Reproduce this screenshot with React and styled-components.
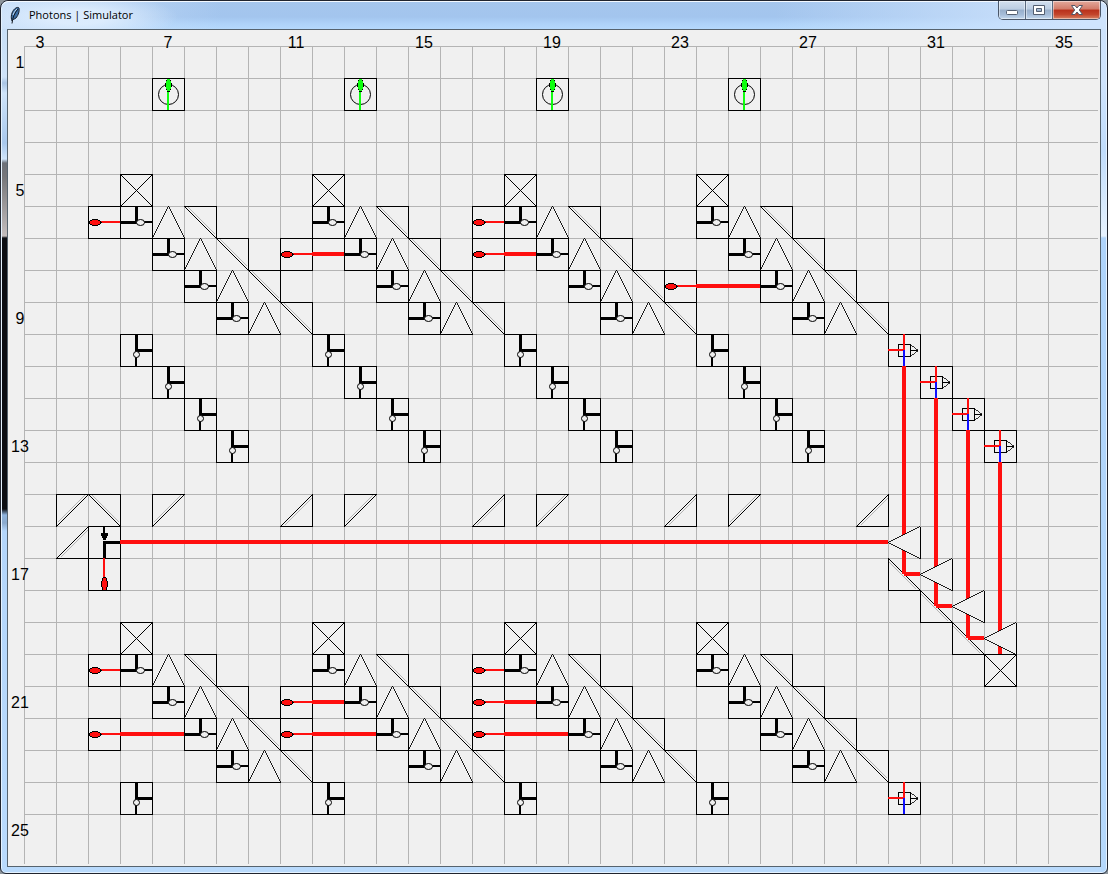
import React from "react";
import styled, { createGlobalStyle } from "styled-components";

const GlobalStyle = createGlobalStyle`
  * { box-sizing: border-box; }
  body { margin: 0; background: #8d959c; }
`;

const Window = styled.div`
  display: flex;
  flex-direction: column;
  min-height: 100vh;
  padding: 0 6px 6px;
  border: 1px solid #20242e;
  border-radius: 8px 8px 6px 6px;
  box-shadow: inset 0 0 0 1px #e4f2ff;
  font-family: "Open Sans", "Noto Sans", sans-serif;
  background:
    linear-gradient(#c3dcf6 0, #cfe3f8 76px, #a9c4e4 82px, #cfe4fa 92px, #a9c8ec 142px, #cfe4fa 158px, #6c7078 162px, #77777a 176px, #c4bdbd 235px, #0b0d12 237px, #0b0d12 508px, #8fb4de 514px, #8aa9cc 522px, #b4d6fb 530px, #b9dafc 100%) 1px 0 / 5px 100% no-repeat,
    linear-gradient(#cbe1fb 0, #cfe4fd 80px, #c0dcfb 150px, #e6f2fe 235px, #aed3fa 237px, #b5d8fc 100%) right 1px top 0 / 5px 100% no-repeat,
    #b9dafc;
`;

const TitleBar = styled.header`
  display: flex;
  align-items: center;
  height: 28px;
  margin: 0 -5px;
  padding: 0 6px 2px;
  border-top: 1px solid #f4f9ff;
  border-radius: 7px 7px 0 0;
  background:
    radial-gradient(ellipse 100px 24px at 76px 15px, rgba(225, 239, 254, 0.85) 30%, rgba(225, 239, 254, 0) 100%),
    linear-gradient(90deg, #c8dff9 0, rgba(200, 223, 249, 0) 220px, rgba(200, 223, 249, 0) 70%, #cfe4fd 98%),
    linear-gradient(#a5c6ed 0, #a3c5ee 55%, #aed2f8 80%, #b5d9fd 100%);
`;

const Title = styled.h1`
  flex: 1;
  margin: 0 0 0 7px;
  color: #000;
  font-size: 11px;
  font-weight: 400;
  line-height: 16px;
  white-space: nowrap;
`;

const Controls = styled.div`
  display: flex;
  align-self: flex-start;
  height: 19px;
  margin-top: -1px;
  margin-right: -1px;
  overflow: hidden;
  border: 1px solid #4a5668;
  border-top: 0;
  border-radius: 0 0 5px 5px;
`;

const ControlButton = styled.button`
  display: flex;
  align-items: center;
  justify-content: center;
  width: ${(p) => (p.$danger ? 47 : 27)}px;
  padding: 0;
  border: 0;
  border-right: ${(p) => (p.$danger ? "0" : "1px solid #5a6a80")};
  background: ${(p) =>
    p.$danger
      ? "linear-gradient(#e3a99c 0, #d27b69 45%, #b8301b 50%, #c3452c 75%, #d98263 100%)"
      : "linear-gradient(#d3e0ef 0, #bccde2 45%, #98afcb 50%, #a5bcd8 75%, #c3d8ee 100%)"};
  box-shadow: inset 0 0 0 1px rgba(255, 255, 255, 0.45);
`;

const Client = styled.main`
  display: flex;
  flex: 1;
  padding: 0 2px 2px 0;
  border: 1px solid #56636e;
  background: #f0f0f0;
`;

const Board = styled.svg`
  display: block;
  flex: 1;
  width: 100%;
  min-width: 0;
  min-height: 800px;
  overflow: hidden;
  shape-rendering: crispEdges;
`;

const Label = styled.text`
  fill: #000;
  font-family: "Liberation Sans", Arial, sans-serif;
  font-size: 16px;
  text-anchor: middle;
`;

const INK = "#000";
const RED = "#ff0f0f";
const GREEN = "#0fff0f";
const BLUE = "#0f0fff";
const PAPER = "#f0f0f0";
const CELL = 32;
const left = (col) => 16 + CELL * (col - 3);
const top = (row) => 16 + CELL * (row - 1);

const range = (n) => Array.from({ length: n }, (_, i) => i);

function Cell({ col, row, children }) {
  return <g transform={`translate(${left(col)} ${top(row)})`}>{children}</g>;
}

const Frame = () => <rect x="0.5" y="0.5" width="32" height="32" fill={PAPER} stroke={INK} />;

const CrossBox = () => (
  <>
    <Frame />
    <path d="M0.5 0.5 32.5 32.5M0.5 32.5 32.5 0.5" stroke={INK} />
  </>
);

const Clock = () => (
  <>
    <Frame />
    <circle cx="16.5" cy="16.5" r="10" fill="none" stroke={INK} shapeRendering="auto" />
    <rect x="15" y="12" width="2" height="20" fill={GREEN} />
    <path d="M15 1h3v1h1v3h1v4h-1v3h-1v2h-3v-2h-1v-3h-1v-4h1v-3h1z" fill={INK} />
    <path d="M15 1h3v2h1v8h-1v2h-3v-2h-1v-8h1z" fill={GREEN} />
  </>
);

const HorizontalBulb = () => (
  <>
    <path d="M4 13h6v1h2v1h1v1h1v1h-1v1h-1v1h-2v1h-6v-1h-2v-1h-1v-1h-1v-1h1v-1h1v-1h2z" fill={INK} />
    <path d="M4 14h6v1h2v3h-2v1h-6v-1h-2v-3h2z" fill={RED} />
  </>
);

const Emitter = () => (
  <>
    <Frame />
    <rect x="13" y="15" width="19" height="2" fill={RED} />
    <HorizontalBulb />
  </>
);

const DownEmitter = () => (
  <>
    <Frame />
    <rect x="15" y="0" width="2" height="20" fill={RED} />
    <path d="M15 19h3v1h1v3h1v6h-1v3h-5v-3h-1v-6h1v-3h1z" fill={INK} />
    <path d="M15 20h3v3h1v6h-1v3h-3v-3h-1v-6h1z" fill={RED} />
  </>
);

const Gate = () => (
  <>
    <Frame />
    <path d="M0 15h15v-15h3v18h-18z" fill={INK} />
    <rect x="23" y="15" width="9" height="2" fill={INK} />
    <ellipse cx="20.5" cy="16.5" rx="4" ry="3" fill={PAPER} stroke={INK} shapeRendering="auto" />
  </>
);

const DropGate = () => (
  <>
    <Frame />
    <path d="M15 0h3v15h14v3h-17z" fill={INK} />
    <rect x="15" y="22" width="2" height="10" fill={INK} />
    <circle cx="16.5" cy="20.5" r="3" fill={PAPER} stroke={INK} shapeRendering="auto" />
  </>
);

const TurnGate = () => (
  <>
    <Frame />
    <rect x="15" y="0" width="2" height="7" fill={INK} />
    <path d="M13 7h7v3h-1v2h-1v2h-3v-2h-1v-2h-1z" fill={INK} />
    <path d="M15 32v-17h17v3h-14v14z" fill={INK} />
  </>
);

const Detector = () => (
  <>
    <Frame />
    <rect x="10.5" y="10.5" width="12" height="12" fill="none" stroke={INK} />
    <path d="M22.5 11.5 29.5 16.5 22.5 21.5" fill="none" stroke={INK} strokeWidth="0.8" />
    <path d="M22.5 16.5h7" stroke={INK} />
    <path d="M15 0h2v17h-17v-2h15z" fill={RED} />
    <rect x="15" y="16" width="2" height="16" fill={BLUE} />
  </>
);

/* Each facing has the two sloped legs and the straight base */
const trianglePaths = {
  up: ["M0.5 32 16.5 0 32.5 32", "M0.5 32.5h32"],
  left: ["M32 0.5 0 16.5 32 32.5", "M32.5 0.5v32"],
};

const Triangle = ({ facing = "up" }) => (
  <>
    <path d={trianglePaths[facing][0]} fill={PAPER} stroke={INK} strokeWidth="0.88" />
    <path d={trianglePaths[facing][1]} stroke={INK} />
  </>
);

const mirrorPaths = {
  upperRight: ["M0.5 0.5H32.5V32.5z", "M4.5 1.5 31.5 28.5"],
  lowerLeft: ["M0.5 0.5V32.5H32.5z", "M1.5 4.5 28.5 31.5"],
  upperLeft: ["M32.5 0.5H0.5V32.5z", "M1.5 28.5 28.5 1.5"],
  lowerRight: ["M0.5 32.5H32.5V0.5z", "M4.5 31.5 31.5 4.5"],
};

const Mirror = ({ side }) => (
  <>
    <path d={mirrorPaths[side][0]} fill={PAPER} stroke={INK} />
    <path d={mirrorPaths[side][1]} stroke="#b4b4b4" />
  </>
);

const parts = {
  cross: CrossBox,
  clock: Clock,
  emitter: Emitter,
  downEmitter: DownEmitter,
  gate: Gate,
  dropGate: DropGate,
  turnGate: TurnGate,
  detector: Detector,
  triangle: Triangle,
  mirror: Mirror,
};

const columns = [6, 12, 18, 24];

const ladder = (col, row) => [
  ["cross", col, row],
  ...range(4).flatMap((i) => [
    ["mirror", col + 2 + i, row + 1 + i, { side: "upperRight" }],
    ["triangle", col + 1 + i, row + 1 + i],
    ["gate", col + i, row + 1 + i],
  ]),
];

const items = [
  ...columns.map((c) => ["clock", c + 1, 2]),
  ...columns.flatMap((c) => [...ladder(c, 5), ...ladder(c, 19)]),
  ...columns.flatMap((c) => range(4).map((i) => ["dropGate", c + i, 10 + i])),
  ...columns.map((c) => ["dropGate", c, 24]),
  ...[[5, 6], [17, 6], [11, 7], [17, 7], [23, 8], [5, 20], [17, 20], [11, 21], [17, 21], [5, 22], [11, 22], [17, 22]].map(
    ([c, r]) => ["emitter", c, r]
  ),
  ...[4, 7, 13, 19, 25].map((c) => ["mirror", c, 15, { side: "upperLeft" }]),
  ["mirror", 5, 15, { side: "upperRight" }],
  ...[11, 17, 23, 29].map((c) => ["mirror", c, 15, { side: "lowerRight" }]),
  ["mirror", 4, 16, { side: "lowerRight" }],
  ["turnGate", 5, 16],
  ["downEmitter", 5, 17],
  ...range(4).map((i) => ["detector", 30 + i, 10 + i]),
  ["detector", 30, 24],
  ...range(3).map((i) => ["mirror", 30 + i, 17 + i, { side: "lowerLeft" }]),
  ["cross", 33, 20],
];

/* Beams that cross whole cells: first column, row, number of cells */
const rowBeams = [
  [12, 7, 1], [18, 7, 1], [24, 8, 2],
  [12, 21, 1], [18, 21, 1],
  [6, 22, 2], [12, 22, 2], [18, 22, 2],
  [6, 16, 24],
];

export default function App() {
  return (
    <>
      <GlobalStyle />
      <Window>
        <TitleBar>
          <svg width="14" height="18" viewBox="0 0 14 18" aria-hidden="true">
            <path d="M4 15C2.500 11 3.500 6 6.500 3 8.500 1.200 10.500 1 11 2 11.700 5 10.500 9 8 12L5.500 13.500z" fill="#3b6ea5" stroke="#17202e" />
            <path d="M4 17.500C4.500 12 6.500 7 10 3" fill="none" stroke="#10161f" />
            <path d="M5 9C6 6 7.500 4 9 3" fill="none" stroke="#c2dcf5" />
          </svg>
          <Title>Photons | Simulator</Title>
          <Controls>
            <ControlButton type="button" aria-label="Minimize">
              <svg width="14" height="14" viewBox="0 0 14 14"><rect x="1.500" y="7.500" width="11" height="4" rx="1" fill="#fff" stroke="#535e70" /></svg>
            </ControlButton>
            <ControlButton type="button" aria-label="Maximize">
              <svg width="14" height="14" viewBox="0 0 14 14">
                <path d="M1.500 2.500h11v9h-11zM4.500 5.500v3h5v-3z" fill="#fff" fillRule="evenodd" stroke="#535e70" />
              </svg>
            </ControlButton>
            <ControlButton type="button" aria-label="Close" $danger>
              <svg width="14" height="14" viewBox="0 0 14 14">
                <path d="M1.500 2.500h3.500L7 5l2-2.500h3.500L9.300 7l3.200 4.500H9L7 9l-2 2.500H1.500L4.700 7z" fill="#fff" stroke="#535666" />
              </svg>
            </ControlButton>
          </Controls>
        </TitleBar>
        <Client>
          <Board role="img" aria-label="Photon circuit">
            <g stroke="#b4b4b4">
              {range(33).map((i) => (
                <line key={`v${i}`} x1={left(3 + i) + 0.5} x2={left(3 + i) + 0.5} y1="16" y2="100%" />
              ))}
              {range(25).map((i) => (
                <line key={`h${i}`} x1="16" x2="100%" y1={top(1 + i) + 0.5} y2={top(1 + i) + 0.5} />
              ))}
            </g>
            {range(9).map((i) => (
              <Label key={`c${i}`} x={left(3 + 4 * i) + 16} y="18">{3 + 4 * i}</Label>
            ))}
            {range(7).map((i) => (
              <Label key={`r${i}`} x="12" y={top(1 + 4 * i) + 22}>{1 + 4 * i}</Label>
            ))}
            {items.map(([kind, col, row, props]) => {
              const Part = parts[kind];
              return (
                <Cell key={`${kind}-${col}-${row}`} col={col} row={row}>
                  <Part {...props} />
                </Cell>
              );
            })}
            <g fill={RED}>
              {rowBeams.map(([col, row, cells]) => (
                <rect key={`${col}-${row}`} x={left(col)} y={top(row) + 14} width={cells * CELL} height="4" />
              ))}
              {range(4).map((i) => (
                <rect
                  key={i}
                  x={left(30 + i) + 14}
                  y={top(11 + i)}
                  width="4"
                  height={i < 3 ? CELL * 6 + 16 : CELL * 6}
                />
              ))}
              {range(3).map((i) => (
                <rect key={i} x={left(30 + i) + 16} y={top(17 + i) + 14} width="16" height="4" />
              ))}
            </g>
            {range(4).map((i) => (
              <Cell key={i} col={30 + i} row={16 + i}>
                <Triangle facing="left" />
              </Cell>
            ))}
          </Board>
        </Client>
      </Window>
    </>
  );
}
